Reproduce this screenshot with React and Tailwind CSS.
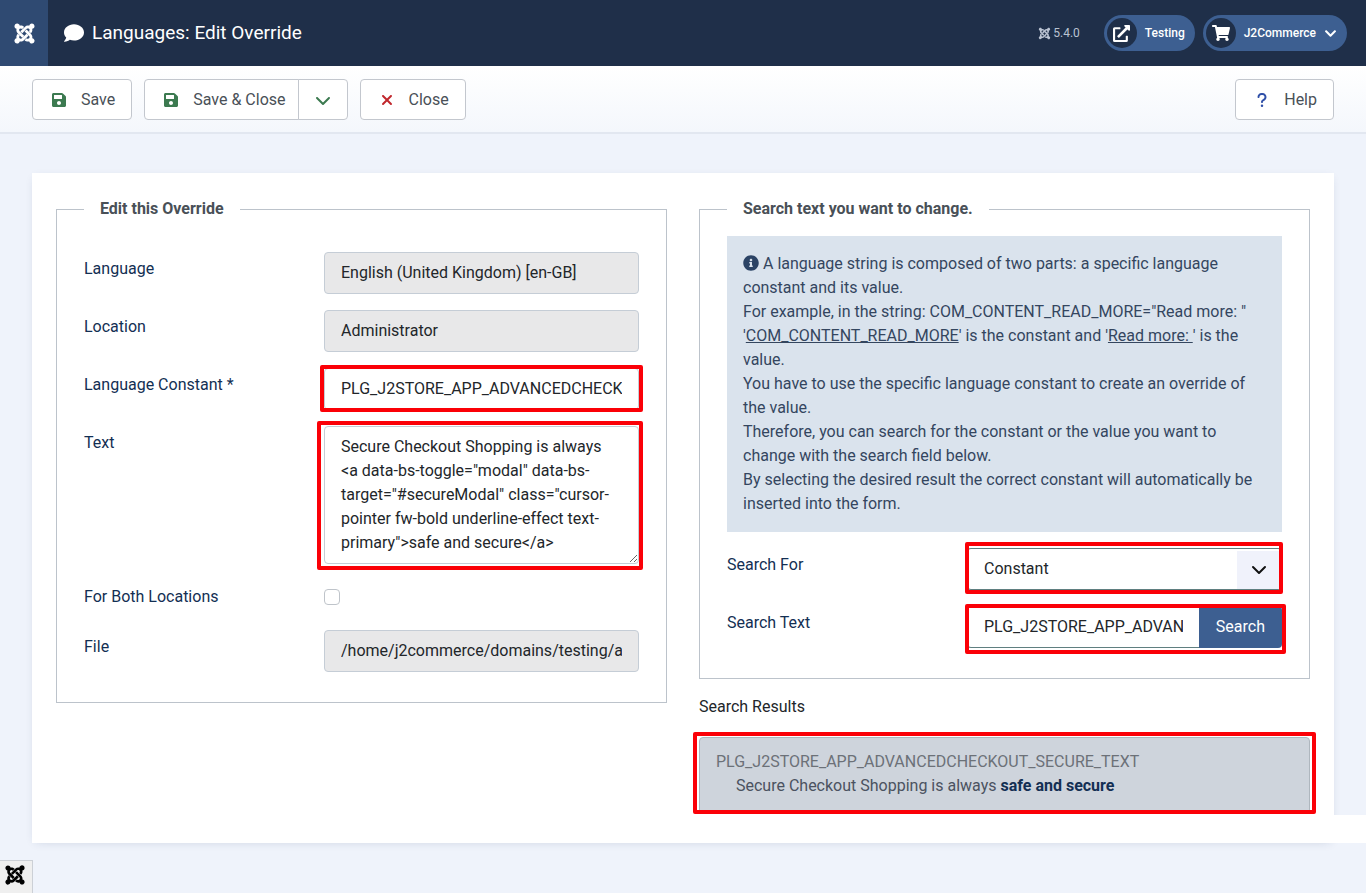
import { useState } from 'react';
import { FaChevronDown as FaChevronDownBold, FaComment, FaExternalLinkAlt, FaInfoCircle, FaJoomla, FaSave, FaShoppingCart } from 'react-icons/fa';
import { FaChevronDown, FaQuestion, FaXmark } from 'react-icons/fa6';

const CONSTANT = 'PLG_J2STORE_APP_ADVANCEDCHECKOUT_SECURE_TEXT';
const OVERRIDE_TEXT = 'Secure Checkout Shopping is always <a data-bs-toggle="modal" data-bs-target="#secureModal" class="cursor-pointer fw-bold underline-effect text-primary">safe and secure</a>';

const BUTTON = 'flex h-[41px] items-center rounded border border-[#c3c7ce] bg-white pt-px text-[#495057]';
const PILL = 'flex h-9 items-center gap-2 rounded-full bg-[#3d5f91] pl-[3px] pr-2.5 text-xs font-medium';
const FIELD = 'block w-full min-w-0 rounded border border-[#c5cdd6] px-4 py-2 leading-6 text-[#22262a]';
const READONLY = `${FIELD} bg-[#e8e8e9]`;
const FIELDSET = 'min-w-0 border border-[#bcc3cb] px-[27px] pb-[30px]';
const LEGEND = 'px-4 font-bold leading-6 text-[#495057]';

function Row({ label, id, children }) {
  return (
    <div className="flex">
      <label htmlFor={id} className="w-60 shrink-0 pt-[5px] leading-6 text-[#132f53]">{label}</label>
      <div className="min-w-0 flex-1">{children}</div>
    </div>
  );
}

// Red frame drawn around the things the user has to look at
function Marked({ frame, children }) {
  return (
    <div className="relative">
      {children}
      <div className={`pointer-events-none absolute rounded-xs border-4 border-[#fb0007] ${frame}`} />
    </div>
  );
}

function Header() {
  return (
    <header className="flex h-[66px] items-center bg-[#1f2f49] text-white">
      <a href="#" aria-label="Home" className="flex h-full w-12 items-center justify-center bg-[#2f4a72]">
        <FaJoomla size={23} />
      </a>
      <h1 className="ml-4 flex flex-1 items-center gap-2 text-[19px]">
        <FaComment size={20} />
        Languages: Edit Override
      </h1>
      <div className="mr-6 flex items-center gap-0.5 text-xs text-[#bac3d2]">
        <FaJoomla size={13} />
        5.4.0
      </div>
      <a href="#" className={`${PILL} mr-2`}>
        <span className="flex size-[30px] items-center justify-center rounded-full bg-[#1f2f49]">
          <FaExternalLinkAlt size={17} />
        </span>
        Testing
      </a>
      <button type="button" className={`${PILL} mr-[19px]`}>
        <span className="flex size-[30px] items-center justify-center rounded-full bg-[#1f2f49]">
          <FaShoppingCart size={18} />
        </span>
        J2Commerce
        <FaChevronDownBold size={13} />
      </button>
    </header>
  );
}

function Toolbar() {
  return (
    <div className="flex h-[68px] items-center gap-3 border-b-2 border-[#e2e7f0] bg-gradient-to-b from-white to-[#f4f7fc] px-8">
      <button type="button" className={`${BUTTON} gap-3.5 px-4`}>
        <FaSave size={16} className="ml-0.5 text-[#3c7a50]" />
        Save
      </button>
      <div className="flex">
        <button type="button" className={`${BUTTON} gap-3.5 rounded-r-none px-3 pl-4`}>
          <FaSave size={16} className="ml-0.5 text-[#3c7a50]" />
          Save &amp; Close
        </button>
        <button type="button" aria-label="More save options" className={`${BUTTON} -ml-px w-[50px] justify-center rounded-l-none`}>
          <FaChevronDown size={16} className="text-[#3c7a50]" />
        </button>
      </div>
      <button type="button" className={`${BUTTON} gap-3.5 px-4`}>
        <FaXmark size={16} className="ml-0.5 text-[#c1272d]" />
        Close
      </button>
      <button type="button" className={`${BUTTON} ml-auto gap-3.5 px-4`}>
        <FaQuestion size={16} className="ml-0.5 text-[#3050a8]" />
        Help
      </button>
    </div>
  );
}

function OverrideForm() {
  const [constant, setConstant] = useState(CONSTANT);
  const [text, setText] = useState(OVERRIDE_TEXT);

  return (
    <fieldset className={FIELDSET}>
      <legend className={LEGEND}>Edit this Override</legend>
      <div className="flex flex-col gap-4 pt-[31px]">
        <Row label="Language" id="language">
          <input id="language" readOnly value="English (United Kingdom) [en-GB]" className={READONLY} />
        </Row>
        <Row label="Location" id="location">
          <input id="location" readOnly value="Administrator" className={READONLY} />
        </Row>
        <Row label="Language Constant *" id="constant">
          <Marked frame="-inset-x-1 -top-[3px] -bottom-0.5">
            <input id="constant" required value={constant} onChange={(e) => setConstant(e.target.value)} className={FIELD} />
          </Marked>
        </Row>
        <Row label="Text" id="text">
          <Marked frame="-left-[7px] -right-1 -top-[5px] -bottom-1.5">
            <textarea id="text" rows={5} value={text} onChange={(e) => setText(e.target.value)} className={FIELD} />
          </Marked>
        </Row>
        <Row label="For Both Locations" id="both">
          <div className="flex h-[34px] items-center">
            <input id="both" type="checkbox" className="size-4 appearance-none rounded border border-[#bfc4ca] bg-white checked:bg-[#3d5f91]" />
          </div>
        </Row>
        <Row label="File" id="file">
          <input id="file" readOnly value="/home/j2commerce/domains/testing/a" className={READONLY} />
        </Row>
      </div>
    </fieldset>
  );
}

function SearchForm() {
  const [type, setType] = useState('constant');
  const [query, setQuery] = useState(CONSTANT);

  return (
    <fieldset className={FIELDSET}>
      <legend className={LEGEND}>Search text you want to change.</legend>
      <div className="flex flex-col gap-4 pt-[15px]">
        <div className="bg-[#dae3ed] p-4 leading-6 text-[#34465f]">
          <p>
            <FaInfoCircle size={16} className="mr-1 inline align-[-2px] text-[#2b4365]" />
            A language string is composed of two parts: a specific language constant and its value.
          </p>
          <p>For example, in the string: COM_CONTENT_READ_MORE="Read more: "</p>
          <p>'<u>COM_CONTENT_READ_MORE</u>' is the constant and '<u>Read more: </u>' is the value.</p>
          <p>You have to use the specific language constant to create an override of the value.</p>
          <p>Therefore, you can search for the constant or the value you want to change with the search field below.</p>
          <p>By selecting the desired result the correct constant will automatically be inserted into the form.</p>
        </div>
        <Row label="Search For" id="searchtype">
          <Marked frame="-left-0.5 -right-px -top-1.5 -bottom-1">
            <select id="searchtype" value={type} onChange={(e) => setType(e.target.value)} className={`${FIELD} appearance-none border-y-[#5f7f80] bg-white`}>
              <option value="constant">Constant</option>
              <option value="value">Value</option>
            </select>
            <span className="pointer-events-none absolute bottom-px right-px top-[3px] flex w-11 items-center justify-center bg-[#f0f2fb]">
              <svg className="size-4" viewBox="0 0 16 16" fill="none" stroke="#111" strokeWidth="2" strokeLinecap="round" strokeLinejoin="round">
                <path d="M2 5l6 6 6-6" />
              </svg>
            </span>
          </Marked>
        </Row>
        <Row label="Search Text" id="searchtext">
          <Marked frame="-left-0.5 -right-1 -top-0.5 -bottom-1.5">
            <div className="flex">
              <input id="searchtext" value={query} onChange={(e) => setQuery(e.target.value)} className={`${FIELD} flex-1 rounded-r-none border-r-0 border-b-[#5f7f80]`} />
              <button type="button" className="rounded-r bg-[#3d5f91] px-[17px] text-white">Search</button>
            </div>
          </Marked>
        </Row>
      </div>
    </fieldset>
  );
}

function SearchResults() {
  return (
    <section>
      <h2 className="mb-[18px] leading-6 text-[#22262a]">Search Results</h2>
      <Marked frame="-inset-x-1.5 -top-[5px] -bottom-[3px]">
        <button type="button" className="block w-full rounded-t border border-[#aeb6be] bg-[#ced4dc] px-4 py-3 text-left leading-6">
          <span className="block text-[#6c7178]">{CONSTANT}</span>
          <span className="block pl-5 text-[#4b5260]">
            Secure Checkout Shopping is always <b className="text-[#132f53]">safe and secure</b>
          </span>
        </button>
      </Marked>
    </section>
  );
}

export default function App() {
  return (
    <div className="min-h-screen bg-[#eff3fb] font-[Roboto,sans-serif] text-base">
      <Header />
      <Toolbar />
      <main className="px-8 pb-12 pt-[39px]">
        <div className="relative bg-white p-6 pb-8 shadow-[0_2px_10px_-4px_rgba(30,50,90,0.2)]">
          <div className="grid grid-cols-2 items-start gap-8">
            <OverrideForm />
            <div className="flex min-w-0 flex-col gap-4">
              <SearchForm />
              <SearchResults />
            </div>
          </div>
          <div className="absolute -right-8 bottom-0 h-7 w-8 bg-white" />
        </div>
      </main>
      <a href="#" aria-label="Debug console" className="fixed bottom-0 left-0 flex size-[33px] items-center justify-center border-r border-t border-[#ccd0d6] bg-[#efefef] pr-0.5 pb-1 text-black">
        <FaJoomla size={22} />
      </a>
    </div>
  );
}
